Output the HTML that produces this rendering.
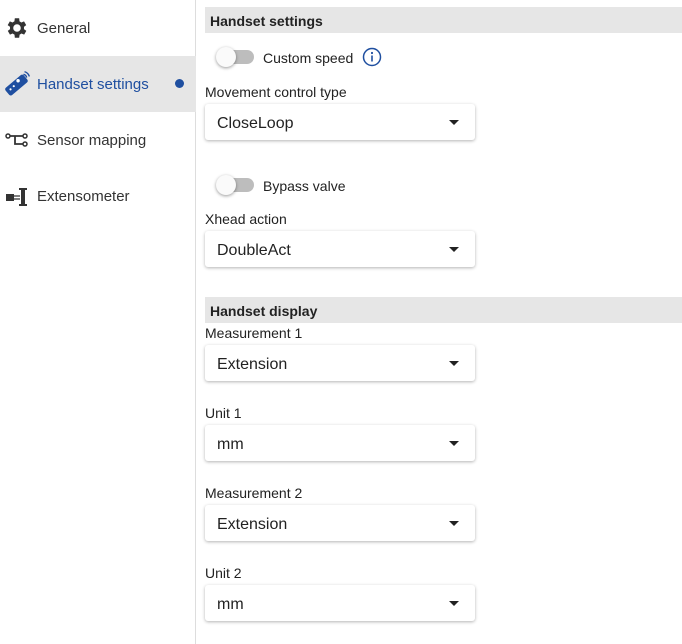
<!DOCTYPE html>
<html><head><style>
*{margin:0;padding:0;box-sizing:border-box}
body{width:682px;height:644px;background:#fff;font-family:"Liberation Sans",sans-serif;color:#222;position:relative;overflow:hidden}
.abs{position:absolute}
.side{left:0;top:0;width:196px;height:644px;border-right:1px solid #ddd}
.item{position:absolute;left:0;width:196px;height:56px;font-size:15px;line-height:58px;padding-left:37px;color:#333}
.item svg{position:absolute;left:5px;top:16px}
.hdr{left:205px;width:477px;height:26px;background:#e6e6e6;font-weight:bold;font-size:14px;line-height:28px;padding-left:5px;color:#222}
.lbl{left:205px;font-size:14px;color:#222}
.sel{left:205px;width:270px;height:36px;background:#fff;border-radius:3px;box-shadow:0 1px 3px rgba(0,0,0,.3);font-size:16px;line-height:39px;padding-left:12px;color:#222}
.sel:after{content:"";position:absolute;right:16px;top:16px;border-left:5px solid transparent;border-right:5px solid transparent;border-top:5px solid #222}
.tg{left:218px;width:36px;height:14px;border-radius:7px;background:#bdbdbd}
.tg:before{content:"";position:absolute;left:-2px;top:-3px;width:20px;height:20px;border-radius:50%;background:#fafafa;box-shadow:0 1px 3px rgba(0,0,0,.4)}
.tl{left:263px;font-size:14px}
</style></head><body>
<div class="abs side">
 <div class="item" style="top:0">General
  <svg width="26" height="26" viewBox="0 0 24 24" style="left:4px;top:15px"><path fill="#333" d="M19.4 13a7.5 7.5 0 000-2l2.1-1.6-2-3.5-2.5 1a7 7 0 00-1.7-1L15 3h-4l-.4 2.9a7 7 0 00-1.7 1l-2.5-1-2 3.5L6.6 11a7.5 7.5 0 000 2l-2.1 1.6 2 3.5 2.5-1a7 7 0 001.7 1L11 21h4l.4-2.9a7 7 0 001.7-1l2.5 1 2-3.5zM13 15.5a3.5 3.5 0 110-7 3.5 3.5 0 010 7z" transform="translate(-1 0)"/></svg></div>
 <div class="item" style="top:56px;background:#e6e6e6;color:#1f4fa0">Handset settings
  <svg width="28" height="28" viewBox="0 0 26 26" style="left:3px;top:14px"><rect x="8" y="3" width="9" height="22" rx="2" fill="#1f4fa0" transform="rotate(50 12.5 14)"/><circle cx="14" cy="10" r="1.6" fill="#fff"/><circle cx="10" cy="15" r="1" fill="#fff"/><circle cx="7" cy="18" r="1" fill="#fff"/><path d="M19 4a4 4 0 013 3M20 1.5a7 7 0 014.5 4.5" stroke="#1f4fa0" stroke-width="1.3" fill="none"/></svg>
  <span class="abs" style="left:175px;top:23px;width:9px;height:9px;border-radius:50%;background:#1f4fa0"></span></div>
 <div class="item" style="top:112px">Sensor mapping
  <svg width="26" height="24" viewBox="0 0 26 24" style="left:5px;top:18px"><circle cx="3" cy="6" r="2" fill="none" stroke="#333" stroke-width="1.5"/><circle cx="20" cy="6" r="2" fill="none" stroke="#333" stroke-width="1.5"/><circle cx="20" cy="14" r="2" fill="none" stroke="#333" stroke-width="1.5"/><path d="M5 6h13M10 6v8h8" stroke="#333" stroke-width="1.8" fill="none"/></svg></div>
 <div class="item" style="top:168px">Extensometer
  <svg width="26" height="24" viewBox="0 0 26 24" style="left:5px;top:17px"><rect x="1" y="9" width="8" height="7" fill="#333"/><path d="M9 11h6M9 14h6" stroke="#333" stroke-width="1.3"/><rect x="16" y="3" width="4" height="18" fill="#333"/><rect x="14" y="3" width="8" height="2" fill="#333"/><rect x="14" y="19" width="8" height="2" fill="#333"/></svg></div>
</div>

<div class="abs hdr" style="top:7px">Handset settings</div>
<div class="abs tg" style="top:50px"></div>
<div class="abs tl" style="top:50px">Custom speed</div>
<svg class="abs" style="left:362px;top:47px" width="20" height="20" viewBox="0 0 20 20"><circle cx="10" cy="10" r="8.5" fill="none" stroke="#1f4fa0" stroke-width="1.5"/><circle cx="10" cy="6" r="1.1" fill="#1f4fa0"/><path d="M10 8.5v6" stroke="#1f4fa0" stroke-width="1.6"/></svg>
<div class="abs lbl" style="top:84px">Movement control type</div>
<div class="abs sel" style="top:104px">CloseLoop</div>

<div class="abs tg" style="top:178px"></div>
<div class="abs tl" style="top:178px">Bypass valve</div>
<div class="abs lbl" style="top:211px">Xhead action</div>
<div class="abs sel" style="top:231px">DoubleAct</div>

<div class="abs hdr" style="top:297px">Handset display</div>
<div class="abs lbl" style="top:325px">Measurement 1</div>
<div class="abs sel" style="top:345px">Extension</div>
<div class="abs lbl" style="top:405px">Unit 1</div>
<div class="abs sel" style="top:425px">mm</div>
<div class="abs lbl" style="top:485px">Measurement 2</div>
<div class="abs sel" style="top:505px">Extension</div>
<div class="abs lbl" style="top:565px">Unit 2</div>
<div class="abs sel" style="top:585px">mm</div>
</body></html>
